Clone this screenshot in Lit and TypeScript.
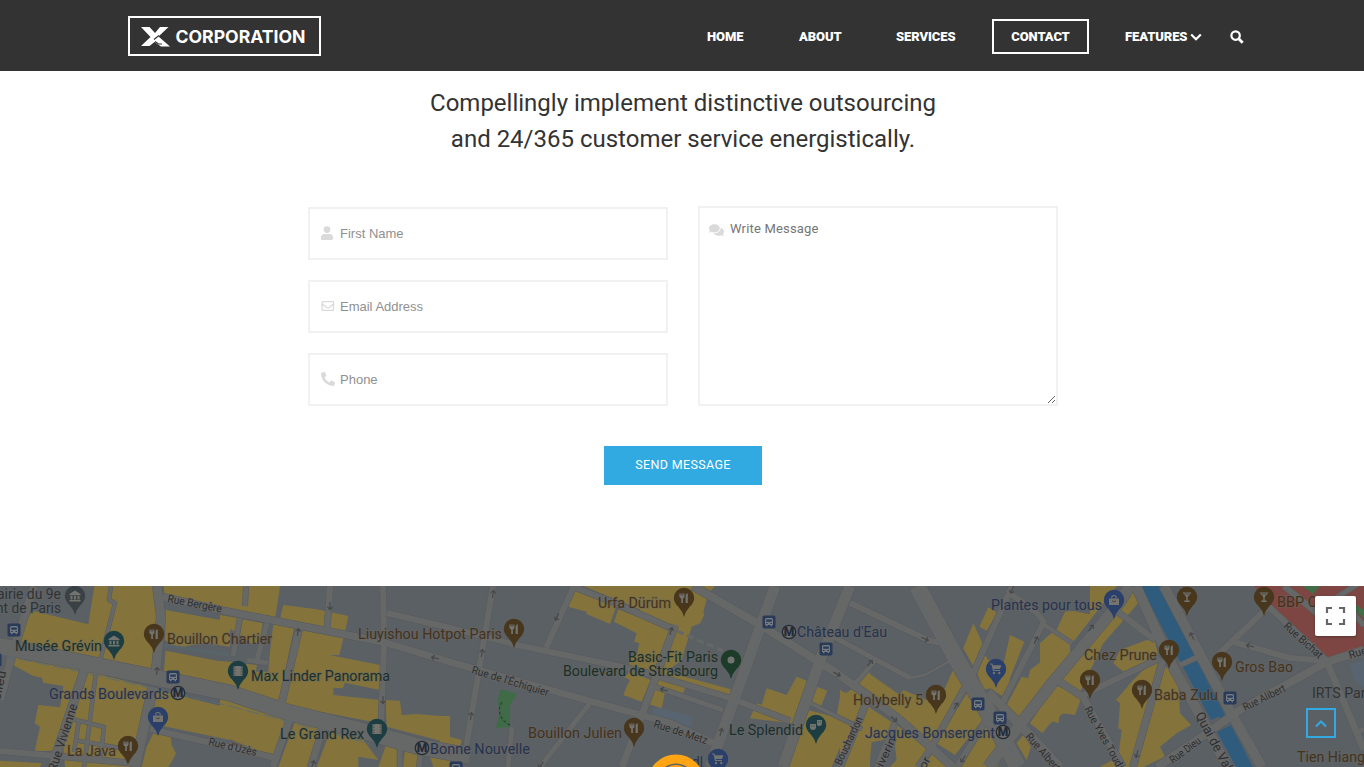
import { LitElement, html, svg, css } from "lit";
import { customElement } from "lit/decorators.js";

// Building blocks of the business district, grouped by tile (x origin of each tile in map pixels, 3 units per pixel).
const blocks: [number, string[]][] = [
  [0, [
    "283,18 460,18 470,80 455,280 300,245 60,195 45,180 97,92 265,133",
    "490,18 690,18 690,90 495,50",
    "497,90 690,125 690,200 610,188 530,205 495,180",
    "497,212 690,250 690,330 490,290",
    "45,225 245,268 180,480 165,511 104,515 120,440 104,430 115,375 180,382 190,318 130,308 125,293 100,288 30,250",
    "265,275 445,320 405,520 395,561 195,561 190,500",
    "470,330 690,385 690,480 500,440 455,430",
    "470,440 512,465 515,495 528,520 518,540 505,561 425,561 440,500",
    "0,542 125,550 120,561 0,561",
  ]],
  [220, [
    "0,18 180,18 165,120 0,80",
    "0,105 57,115 48,155 0,135",
    "68,118 128,130 120,190 90,190 60,165",
    "160,132 222,145 175,370 0,330 0,243 30,245 110,255 108,275 145,275 150,215",
    "190,75 290,88 385,108 375,155 180,118",
    "240,150 370,175 358,225 328,225 480,255 480,330 375,308 368,325 340,323 340,345 480,360 480,430 195,375",
    "497,360 540,362 545,405 590,402 690,410 690,490 500,440",
    "0,350 210,420 165,530 120,515 0,465",
    "225,425 300,445 260,561 175,561 190,520",
    "330,455 430,480 475,540 415,530 415,561 290,561",
    "500,490 530,500 530,561 475,561",
    "555,505 600,515 590,561 550,561",
    "630,530 690,540 690,561 640,561",
  ]],
  [440, [
    "0,408 30,408 30,470 65,480 60,500 0,490",
    "405,22 530,75 510,132 440,102 440,95 385,80",
    "430,18 690,18 690,125",
    "535,88 690,150 640,290 600,270 600,262 570,260 565,235 590,225 598,190 583,185 590,160 522,125",
    "570,275 632,300 605,365 550,345 560,320 570,300 553,292",
    "630,325 675,335 665,385 620,370",
  ]],
  [640, [
    "0,18 225,18 205,40 190,95 193,105 180,130 155,140 125,240 60,290 0,250",
    "60,270 272,328 268,352 135,322 130,340 45,315",
    "380,325 440,345 470,290 500,302 490,380 455,430 330,415 350,370 365,375",
    "530,320 562,332 542,380 512,370",
    "485,385 580,410 630,430 575,561 425,561",
    "690,275 652,320 690,350",
    "600,350 640,325 690,380 690,561 610,561 655,430 590,405",
  ]],
  [840, [
    "50,300 80,275 180,345 190,330 260,360 310,335 340,268 370,320 270,490",
    "0,330 75,370 45,425 0,408",
    "0,430 45,430 0,540",
    "85,380 160,430 130,480 95,487 90,540 50,561 10,561",
    "170,435 265,510 235,561 150,561 170,540 165,500",
    "280,520 345,561 245,561",
    "380,340 435,410 345,525 290,490",
    "440,430 490,520 470,561 365,561",
    "370,205 400,130 427,190 400,258",
    "445,82 472,98 440,152 418,140",
    "435,225 445,240 490,255 510,165 553,185 510,295 508,320 490,350 450,325 430,330 412,280",
    "690,165 690,260 560,430 500,375 545,290 565,295 570,270 610,240 655,165",
    "650,150 690,90 690,185",
    "530,490 550,465 573,500 560,540",
    "570,430 640,325 690,350 690,400 660,400 655,430 635,422 608,460",
  ]],
  [1040, [
    "150,18 230,18 100,185 50,150 75,95 100,93 150,103",
    "0,190 45,150 95,190 0,310",
    "270,28 305,50 290,75 190,190 120,335 60,300 240,90",
    "45,315 125,350 105,405 70,400 45,420 0,455 0,390",
    "240,210 320,180 345,185 355,230 250,275 220,250",
    "310,270 355,245 270,561 180,561 235,530 245,450 235,445 240,370 228,360 280,300",
    "375,260 400,270 415,320 420,400 453,435 410,460 360,500 375,530 310,561 290,561",
  ]],
];

const roads: [string, number][] = [
  ["34,586 12,655 0,700", 8],
  ["85,668 52,767", 8.5],
  ["157,586 161,617 155,680", 9],
  ["153,687 135,767", 10],
  ["0,751 67,757 140,764", 6],
  ["111,586 109,600 115,603 100,661", 3.5],
  ["96,672 84,767", 3.5],
  ["72,719 104,727 100,762", 3.5],
  ["79,720 74,752", 3.5],
  ["74,740 125,749", 3.5],
  ["163,597 220,610 383,642 450,662 550,690 670,723 713,743", 7],
  ["387,613 450,628 517,645 627,668 647,673 730,698 790,721", 6],
  ["330,586 327,632", 6],
  ["299,629 281,706", 7],
  ["383,586 384,645 381,728", 6],
  ["246,586 245,606", 5],
  ["240,618 233,656", 5],
  ["267,623 257,660", 5],
  ["247,660 268,663", 5],
  ["290,718 273,767", 7],
  ["323,728 311,767", 7],
  ["150,729 220,745 275,758", 6],
  ["400,745 400,767", 5],
  ["421,750 419,767", 5],
  ["493,586 466,748", 6],
  ["573,588 546,648", 6],
  ["571,586 615,603 673,629", 6],
  ["675,625 640,720 622,767", 7],
  ["590,703 540,767", 5],
  ["512,727 508,767", 5],
  ["653,686 723,710", 5],
  ["693,586 757,623 835,672 870,697 900,720 953,767", 8],
  ["775,586 717,747 710,767", 11],
  ["850,586 822,655 783,767", 11],
  ["850,603 930,641 945,643", 6],
  ["832,636 910,678", 5],
  ["910,678 925,675 950,661", 2.5],
  ["855,684 877,658", 5],
  ["1012,586 973,674", 6],
  ["1008,592 1036,612 1044,622 1003,702", 6],
  ["1043,624 1072,643", 4],
  ["988,692 1022,727 1060,767", 9],
  ["1130,586 1120,602 1053,682 1018,727 988,767", 11],
  ["965,687 930,750 918,767", 6],
  ["990,714 957,767", 6],
  ["867,701 840,767", 7],
  ["895,723 877,767", 6],
  ["810,703 862,729", 4],
  ["1057,680 1083,697 1123,767", 7],
  ["1083,695 1160,658", 6],
  ["1163,660 1133,767", 7],
  ["1136,586 1173,667 1210,733 1227,767", 10],
  ["1164,586 1232,715 1262,767", 10],
  ["1118,612 1155,640", 6],
  ["1157,767 1213,729 1240,710 1327,662 1364,650", 8],
  ["1219,654 1267,608", 6],
  ["1234,642 1290,658 1327,661", 6],
  ["1268,606 1327,661", 6],
  ["1327,662 1364,750", 7],
  ["1355,734 1364,729", 5],
  ["1284,586 1318,614", 6],
  ["1336,598 1364,580", 5],
  ["1346,604 1364,626", 5],
  ["917,586 957,660 988,712 1018,767", 17],
  ["-10,644 75,661 230,693 287,712 363,731 420,747 470,756", 16],
];

// x, baseline, width, text, tint
const labels: [number, number, number, string, string][] = [
  [-3, 599, 64, "airie du 9e", "gray"],
  [-4, 613, 65, "nt de Paris", "gray"],
  [15, 651, 87, "Musée Grévin", "teal"],
  [167, 644, 105, "Bouillon Chartier", "brown"],
  [49, 699, 120, "Grands Boulevards", "blue"],
  [67, 756, 49, "La Java", "brown"],
  [251, 681, 139, "Max Linder Panorama", "teal"],
  [280, 739, 84, "Le Grand Rex", "teal"],
  [430, 754, 100, "Bonne Nouvelle", "blue"],
  [358, 639, 144, "Liuyishou Hotpot Paris", "brown"],
  [598, 608, 73, "Urfa Dürüm", "brown"],
  [628, 662, 90, "Basic-Fit Paris", "green"],
  [563, 676, 155, "Boulevard de Strasbourg", "green"],
  [528, 738, 94, "Bouillon Julien", "brown"],
  [797, 637, 90, "Château d'Eau", "blue"],
  [729, 735, 74, "Le Splendid", "teal"],
  [692, 767, 11, "dl", "blue"],
  [853, 705, 70, "Holybelly 5", "brown"],
  [865, 738, 130, "Jacques Bonsergent", "blue"],
  [991, 610, 111, "Plantes pour tous", "blue"],
  [1084, 660, 73, "Chez Prune", "brown"],
  [1154, 700, 64, "Baba Zulu", "brown"],
  [1277, 607, 48, "BBP Ca", "brown"],
  [1235, 672, 58, "Gros Bao", "brown"],
  [1312, 698, 57, "IRTS Pari", "gray"],
  [1297, 762, 68, "Tien Hiang", "brown"],
];

const streets: [number, number, number, string, number, number?][] = [
  [167, 602, 55, "Rue Bergère", 11],
  [208, 745, 49, "Rue d'Uzès", 13],
  [471, 673, 80, "Rue de l'Échiquier", 17],
  [653, 727, 56, "Rue de Metz", 18],
  [56, 772, 70, "Rue Vivienne", -72, 12.5],
  [0, 701, 30, "elieu", -78, 12.5],
  [841, 766, 52, "Bouchardon", -65],
  [880, 774, 38, "eiverin", -65],
  [925, 770, 12, "or", -62],
  [1025, 737, 52, "Rue Alberto", 49],
  [1084, 709, 75, "Rue Yves Toudic", 61],
  [1173, 764, 36, "Rue Dieu", -37],
  [1195, 715, 81, "Quai de Valmy", 62, 13.5],
  [1245, 711, 46, "Rue Alibert", -26],
  [1283, 627, 48, "Rue Bichat", 42],
  [1350, 659, 28, "Rue A", -17],
];

const pins: [number, number, string, string][] = [
  [75, 596, "gray", "museum"], [114, 641, "teal", "museum"], [154, 634, "brown", "food"],
  [158, 717, "blue", "bag"], [128, 746, "brown", "food"], [238, 671, "teal", "film"],
  [377, 729, "teal", "film"], [514, 629, "brown", "food"], [684, 598, "brown", "food"],
  [731, 660, "green", "dot"], [634, 728, "brown", "food"], [816, 725, "teal", "mask"],
  [718, 759, "blue", "cart"], [936, 695, "brown", "food"], [996, 669, "blue", "cart"],
  [1114, 600, "blue", "bag"], [1169, 650, "brown", "food"], [1090, 680, "brown", "food"],
  [1142, 690, "brown", "food"], [1187, 597, "brown", "drink"], [1264, 597, "brown", "drink"],
  [1222, 662, "brown", "food"],
];

const glyphs: Record<string, unknown> = {
  food: svg`<path class="gf" d="M-4.6-4.5h5v3.3q0 1.4-1.5 1.6V5h-1.7V.4q-1.8-.2-1.8-1.8zM1.6 5v-7.5q0-2 2.2-2.2V5z"/><path class="slit" d="M-3-4.5v2M-1.2-4.5v2"/>`,
  museum: svg`<path class="gf" d="M-5.5-2L0-5.5 5.5-2v1.2h-11zM-5.5 4h11v1.4h-11zM-4.5 0h2v3.4h-2zM-1 0h2v3.4h-2zM2.5 0h2v3.4h-2z"/>`,
  bag: svg`<path class="gf" d="M-5-1.500h10v6.500h-10z"/><path class="gs" d="M-2.200-1.500v-1q0-2 2.200-2t2.200 2v1"/><path class="slit" d="M-2 .7Q0 3 2 .7"/>`,
  film: svg`<path class="gf" d="M-4.500-5h9V5h-9z"/><path class="slit" stroke-dasharray="1.300 1.300" d="M-3.200-5V5M3.200-5V5"/>`,
  dot: svg`<circle class="gf" r="3.500"/>`,
  mask: svg`<path class="gf" d="M-6-1h6v3q0 3-3 3t-3-3zM1-5h5v3q0 3-3 3-1 0-2-1z"/><path class="slit" d="M-4.700 1h1M-2.300 1h1M2-3h1M4-3h1"/>`,
  cart: svg`<path class="gs" d="M-6-5h2L-2.500 1.500H4M-3-3h7.500L3.500-.5H-2"/><path class="gf" d="M-3.500-3.500h8.500L3.700 0h-6.500z"/><circle class="gf" cx="-2" cy="4" r="1.200"/><circle class="gf" cx="3.300" cy="4" r="1.200"/>`,
  drink: svg`<path class="gf" d="M-4.500-4.500h9L.7 0v3.500h2V5h-5.400V3.500h2V0z"/><path class="slit" d="M-2.500-3h5"/>`,
};

const stops: [number, number][] = [[14, 630], [-5, 660], [173, 677], [456, 768], [769, 622], [826, 649], [978, 704], [1000, 718], [1230, 698]];
const metros: [number, number][] = [[178, 693], [422, 748], [789, 632], [1003, 732]];
const arrows: [number, number, number][] = [
  [157, 671, 5], [298, 632, 10], [330, 606, 180], [383, 700, 180], [435, 658, -78], [493, 594, 8], [482, 653, 10],
  [471, 716, 8], [557, 617, 205], [671, 631, 18], [664, 690, -75], [721, 732, 15], [837, 674, 118], [925, 639, 115],
  [870, 663, 40], [1012, 590, 200], [1036, 640, 25], [956, 706, 30], [894, 719, 130], [963, 759, 215], [1091, 628, 38],
  [1192, 636, -28], [1137, 754, 195], [1250, 646, -78], [313, 764, 20], [541, 765, 215],
];

@customElement("site-header")
class SiteHeader extends LitElement {
  static styles = css`
    :host { display: block; height: 71px; background: #333; font-family: Roboto, sans-serif; color: #fff; }
    .bar { display: flex; justify-content: space-between; height: 71px; margin: 0 120px 0 128px; align-items: flex-start; }
    .logo { box-sizing: border-box; width: 193px; height: 40px; margin-top: 16px; border: 2px solid #fff; }
    .logo svg { display: block; }
    .word { font: 700 17.5px Inter, sans-serif; fill: #fff; }
    nav { display: flex; align-items: center; height: 35px; margin-top: 19px; }
    a { color: #fff; font-weight: 900; font-size: 13px; line-height: 35px; text-decoration: none; white-space: nowrap; letter-spacing: -0.1px; }
    .home { width: 92px; }
    .about { width: 97px; }
    .services { width: 96px; }
    .contact { box-sizing: border-box; width: 97px; height: 35px; border: 2px solid #fff; text-align: center; line-height: 31px; margin-right: 36px; }
    .features { display: flex; align-items: center; gap: 3px; width: 105px; }
    .search { display: block; width: 14px; height: 14px; }
  `;
  render() {
    return html`<div class="bar">
      <div class="logo"><svg width="189" height="36" viewBox="130 18 189 36">
        <path fill="#fff" d="M141 27h8.500l5.500 6 5-6h8.500L158.500 36.500 170 46.500h-9l-6.500-4.500-5 4H141L150.500 37z"/>
        <path fill="none" stroke="#333" stroke-width="1.100" d="M154 39.500l5-4M155 41.500l3.500 2.500h3.500"/>
        <text class="word" x="175.500" y="43" textLength="130" lengthAdjust="spacingAndGlyphs">CORPORATION</text>
      </svg></div>
      <nav>
        <a class="home">HOME</a><a class="about">ABOUT</a><a class="services">SERVICES</a><a class="contact">CONTACT</a>
        <a class="features">FEATURES<svg width="12" height="8" viewBox="0 0 12 8"><path d="M1.200 1.500L6 6.200l4.800-4.700" fill="none" stroke="#fff" stroke-width="2.200"/></svg></a>
        <svg class="search" viewBox="0 0 14 14"><circle cx="5.600" cy="5.600" r="4.200" fill="none" stroke="#fff" stroke-width="2.200"/><path d="M8.700 8.700l4 4" stroke="#fff" stroke-width="2.800"/></svg>
      </nav></div>`;
  }
}

@customElement("contact-form")
class ContactForm extends LitElement {
  static styles = css`
    :host { display: block; height: 515px; font-family: Roboto, sans-serif; background: #fff; overflow: hidden; }
    h2 { margin: 14px 0 0 2px; font-weight: 400; font-size: 24px; line-height: 36px; color: #333; text-align: center; }
    .grid { display: flex; justify-content: center; gap: 30px; margin: 49px 0 0 2px; }
    .fields { display: flex; flex-direction: column; gap: 20px; padding-top: 1px; }
    label { box-sizing: border-box; display: flex; width: 360px; height: 53px; border: 2px solid #f1f1f1; align-items: center; padding-left: 11px; }
    label svg { width: 14px; height: 14px; margin: 0 5px 1px 0; flex: none; fill: #dadada; }
    input, textarea { border: 0; outline: 0; padding: 0; margin: 0; background: transparent; }
    input { width: 300px; font: 13px "Liberation Sans", Arial, sans-serif; }
    input::placeholder { color: #909090; opacity: 1; }
    label.msg { height: 200px; align-items: stretch; padding-left: 9px; }
    .msg svg { width: 15px; height: 14px; margin: 15px 1px 0 0; }
    textarea { flex: 1; padding: 12px 0 0 5px; font: 13px/17px Roboto, sans-serif; letter-spacing: 0.18px; resize: both; }
    textarea::placeholder { color: #757575; }
    .send { display: block; width: 158px; height: 39px; margin: 40px auto 0; border: 0; padding: 0 0 2px; background: #31a9e1; color: #fff; font: 400 12.5px Roboto, sans-serif; letter-spacing: 0.35px; transform: translateX(1px); }
  `;
  render() {
    return html`<h2>Compellingly implement distinctive outsourcing<br>and 24/365 customer service energistically.</h2>
      <div class="grid">
        <div class="fields">
          <label><svg viewBox="0 0 14 14"><circle cx="6" cy="3.600" r="3.400"/><path d="M0 14v-2.500Q0 8 3.500 8h5Q12 8 12 11.500V12.500Q12 14 10.500 14z"/></svg><input placeholder="First Name"></label>
          <label><svg viewBox="0 0 14 14"><path fill="none" stroke="#dadada" stroke-width="1.300" d="M1.700 2.600h10.200q.6 0 .6.600v7.600q0 .6-.6.600H1.700q-.6 0-.6-.6V3.200q0-.6.600-.6zM1 5l4.500 3.300q1.400 1 2.800 0L12.500 5"/></svg><input placeholder="Email Address"></label>
          <label><svg viewBox="0 0 512 512"><path d="M493.400 24.600l-104-24c-11.300-2.600-22.900 3.300-27.500 13.900l-48 112c-4.200 9.800-1.400 21.300 6.900 28l60.600 49.600c-36 76.700-98.900 140.500-177.200 177.200l-49.600-60.600c-6.800-8.300-18.200-11.100-28-6.900l-112 48C3.900 366.500-2 378.100.6 389.400l24 104C27.100 504.200 36.700 512 48 512c256.100 0 464-207.500 464-464 0-11.200-7.700-20.900-18.600-23.400z" transform="matrix(-1 0 0 1 512 0)"/></svg><input placeholder="Phone"></label>
        </div>
        <label class="msg"><svg viewBox="0 0 576 512"><path d="M416 192c0-88.400-93.100-160-208-160S0 103.600 0 192c0 34.300 14.100 65.900 38 92-13.400 30.200-35.500 54.200-35.800 54.500-2.200 2.300-2.800 5.700-1.500 8.700S4.800 352 8 352c36.600 0 66.900-12.300 88.700-25 32.200 15.700 70.300 25 111.300 25 114.900 0 208-71.600 208-160zm122 220c23.900-26 38-57.700 38-92 0-66.900-53.500-124.200-129.300-148.100.9 6.600 1.300 13.300 1.300 20.100 0 105.900-107.700 192-240 192-10.800 0-21.300-.8-31.700-1.900C207.800 439.600 281.800 480 368 480c41 0 79.100-9.200 111.300-25 21.800 12.700 52.100 25 88.700 25 3.200 0 6.100-1.900 7.300-4.800 1.300-2.900.7-6.300-1.500-8.700-.3-.3-22.400-24.200-35.800-54.500z"/></svg><textarea placeholder="Write Message"></textarea></label>
      </div>
      <button class="send">SEND MESSAGE</button>`;
  }
}

@customElement("city-map")
class CityMap extends LitElement {
  static styles = css`
    :host { display: block; height: 181px; overflow: hidden; position: relative; }
    .map { display: block; width: 1364px; height: 181px; font-family: Roboto, sans-serif; background: #5b6064; }
    .block { fill: #84743c; }
    .water { fill: #2f5b7d; }
    .edge { fill: none; stroke: #575a5d; stroke-linejoin: round; }
    .road { fill: none; stroke: #666767; stroke-linejoin: round; }
    .thin { fill: none; stroke: #566b79; stroke-width: 0.8; stroke-dasharray: 14 4; }
    .label { font-size: 14px; font-weight: 400; paint-order: stroke; stroke: #666; stroke-opacity: 0.4; stroke-width: 2px; }
    .street { font-weight: 400; fill: #2c2e2f; paint-order: stroke; stroke: #686868; stroke-width: 1.500px; }
    .brown { fill: #45321a; }
    .blue { fill: #26324f; }
    .teal { fill: #19302f; }
    .green { fill: #1b3023; }
    .gray { fill: #2f3336; }
    .pin-blue { fill: #2b3f6b; }
    .pin-brown { fill: #48371d; }
    .pin-teal { fill: #1c3d41; }
    .pin-green { fill: #1c3b29; }
    .pin-gray { fill: #3a4145; }
    .gf { fill: #73746f; }
    .gs { fill: none; stroke: #73746f; stroke-width: 1.200; }
    .slit { fill: none; stroke: #3e3a30; stroke-width: 0.8; }
    .arrow { fill: none; stroke: #454748; stroke-width: 1.200; }
    .m { font-size: 12px; font-weight: 900; text-anchor: middle; fill: #232a38; }
    .full { position: absolute; left: 1315px; top: 10px; width: 41px; height: 40px; background: #fff; border-radius: 2px; box-shadow: 0 1px 3px rgba(0,0,0,.3); }
    .top { position: absolute; left: 1306px; top: 122px; width: 26px; height: 26px; border: 2px solid #31a9e1; }
    .full svg, .top svg { display: block; }
  `;
  render() {
    return html`<svg class="map" viewBox="0 586 1364 181">
      ${blocks.map(([x, list]) => svg`<g transform="translate(${x} 580) scale(.33333)">${list.map(p => svg`<polygon class="block" points=${p}/>`)}</g>`)}
      <polygon fill="#7e4642" points="1254,586 1364,586 1364,652 1334,660 1327,660 1284,620"/>
      <polygon fill="#436c48" points="1302,586 1320,586 1313,594"/><polygon fill="#436c48" points="1355,604 1364,610 1364,618 1354,610"/>
      <polygon fill="#3f6b47" points="501,689 517,694 510,705 510,727 496,728 500,711 497,702"/>
      <path fill="none" stroke="#2f3c35" stroke-width="1.200" stroke-dasharray="3 2" d="M502 702q-6 10 2 19l7 5"/>
      <polygon fill="#596471" points="655,707 692,716 691,727 649,717"/>
      <polygon fill="#596471" points="1350,664 1364,660 1364,688 1354,680"/>
      <polygon class="water" points="1140,586 1159,586 1196,658 1182,665"/>
      <polygon class="water" points="1183,667 1197,661 1225,715 1222,718 1218,717 1211,720"/>
      <polygon class="water" points="1217,732 1231,725 1253,767 1236,767"/>
      <path fill="none" stroke="#57656b" stroke-width="3" d="M163 645l67 10"/>
      <g class="edge">${roads.map(([p, w]) => svg`<polyline points=${p} stroke-width=${w + 1}/>`)}</g>
      <g class="road">${roads.map(([p, w]) => svg`<polyline points=${p} stroke-width=${w}/>`)}
        <polyline points="1180,665 1199,656" stroke-width="5"/>
        <polyline points="677,631 723,651" stroke-width="3" stroke-dasharray="7 4"/></g>
      <path class="thin" d="M0 655L80 672 230 706 370 744M776 592L719 747M915 592l37 65 36 57 34 53"/>
      ${arrows.map(([x, y, r]) => svg`<path class="arrow" transform="translate(${x} ${y}) rotate(${r})" d="M0 4V-3.500M-2.500-.8L0-3.500 2.500-.8"/>`)}
      ${streets.map(([x, y, w, t, r, s]) => svg`<text class="street" transform="translate(${x} ${y}) rotate(${r})" font-size=${s ?? 11} textLength=${w} lengthAdjust="spacingAndGlyphs">${t}</text>`)}
      ${stops.map(([x, y]) => svg`<g transform="translate(${x} ${y})"><rect x="-6.500" y="-6.500" width="13" height="13" rx="1.800" fill="#293b58"/><path fill="#747a80" d="M-4-2.500q0-1.500 1.500-1.500h5Q4-4 4-2.500V3H3v1.300H1.500V3h-3v1.300H-3V3h-1z"/><path fill="#293b58" d="M-2.800-2.500h5.600v2.300h-5.600zM-3 1h1.500v1H-3zM1.500 1H3v1H1.500z"/></g>`)}
      ${labels.map(([x, y, w, t, c]) => svg`<text class="label ${c}" x=${x} y=${y} textLength=${w} lengthAdjust="spacingAndGlyphs">${t}</text>`)}
      ${metros.map(([x, y]) => svg`<circle cx=${x} cy=${y} r="6.700" fill="#6b6c6c" stroke="#232a33" stroke-width="1.300"/><text class="m" x=${x} y=${y + 4.3}>M</text>`)}
      ${pins.map(([x, y, c, g]) => svg`<g transform="translate(${x} ${y})"><path class="pin-${c}" d="M0 19Q-1.300 13.500-5.700 8.800-10.200 4.500-10.200 0a10.200 10.200 0 0 1 20.400 0q0 4.500-4.500 8.800Q1.300 13.500 0 19z"/>${glyphs[g]}</g>`)}
      <circle cx="676" cy="783" r="24" fill="#646464" stroke="#ffa514" stroke-width="9"/>
      <path fill="#ffa514" d="M668 767q8-4 16 0z"/>
    </svg>
    <div class="full"><svg width="41" height="40" viewBox="0 0 41 40"><path fill="none" stroke="#666" stroke-width="2.200" d="M12 17v-5h5M24 12h5v5M29 23v5h-5M17 28h-5v-5"/></svg></div>
    <div class="top"><svg width="26" height="26" viewBox="0 0 26 26"><path fill="none" stroke="#31a9e1" stroke-width="2" d="M8 16.500l5-5 5 5"/></svg></div>`;
  }
}

@customElement("app-root")
class AppRoot extends LitElement {
  static styles = css`:host { display: block; width: 1364px; height: 767px; overflow: hidden; background: #fff; }`;
  render() {
    return html`<site-header></site-header><contact-form></contact-form><city-map></city-map>`;
  }
}
